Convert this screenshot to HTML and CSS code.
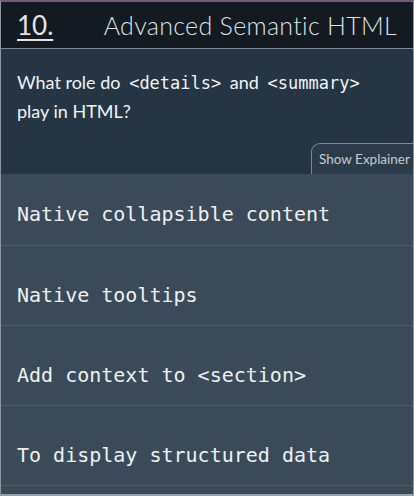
FILE: index.html
```html
<!DOCTYPE html>
<html>
<head>
<meta charset="utf-8">
<link rel="stylesheet" href="styles.css">
</head>
<body>
<div class="card">
  <header class="header">
    <span class="num">10.</span>
    <span class="title">Advanced Semantic HTML</span>
  </header>
  <section class="question">
    <p class="qtext">What role do <code>&lt;details&gt;</code> and <code>&lt;summary&gt;</code> play in HTML?</p>
    <button class="tab">Show Explainer</button>
  </section>
  <ul class="options">
    <li class="opt first">Native collapsible content</li>
    <li class="opt">Native tooltips</li>
    <li class="opt">Add context to &lt;section&gt;</li>
    <li class="opt">To display structured data</li>
  </ul>
</div>
</body>
</html>
```
FILE: styles.css
```css
html, body {
  margin: 0;
  padding: 0;
  background: #3b4a58;
}
.card {
  box-sizing: border-box;
  width: 414px;
  height: 496px;
  display: flex;
  flex-direction: column;
  border-top: 2px solid #6d5a7d;
  border-left: 1px solid #8e969c;
  border-right: 1px solid #8e969c;
  border-bottom: 2px solid #9aa1a6;
  background: #3b4a58;
  font-family: Lato, "Open Sans", sans-serif;
}
.header {
  box-sizing: border-box;
  height: 47px;
  display: flex;
  align-items: center;
  justify-content: space-between;
  padding: 0 16px 0 16px;
  background: #131a21;
  border-bottom: 1px solid #7f878e;
  color: #dfe2e5;
}
.num {
  font-size: 26px;
  font-weight: 400;
  text-decoration: underline;
  text-decoration-thickness: 2px;
  text-underline-offset: 4px;
  color: #e2e4e6;
}
.title {
  font-size: 25px;
  font-weight: 300;
  letter-spacing: 0.3px;
  color: #dfe2e5;
}
.question {
  box-sizing: border-box;
  height: 125px;
  display: flex;
  flex-direction: column;
  background: #253543;
}
.qtext {
  margin: 0;
  padding: 19px 40px 0 16px;
  font-size: 18px;
  line-height: 28px;
  color: #f2f4f5;
}
.qtext code {
  font-family: "DejaVu Sans Mono", monospace;
  font-size: 17px;
  padding: 0 4px;
}
.tab {
  margin-top: auto;
  align-self: flex-end;
  box-sizing: border-box;
  height: 31px;
  width: 102px;
  padding: 0 0 0 7px;
  text-align: left;
  white-space: nowrap;
  overflow: hidden;
  background: #2c3b49;
  border: 1px solid #7c8890;
  border-right: none;
  border-bottom: none;
  border-radius: 9px 0 0 0;
  font-family: Lato, "Open Sans", sans-serif;
  font-size: 13.5px;
  color: #c4cbd0;
}
.options {
  list-style: none;
  margin: 0;
  padding: 0;
  flex: 1;
  background: #3b4a58;
}
.opt {
  box-sizing: border-box;
  height: 80px;
  padding: 37px 16px 0 16px;
  border-bottom: 1px solid #4c5b69;
  font-family: "DejaVu Sans Mono", monospace;
  font-size: 20px;
  line-height: 24px;
  color: #eef1f3;
}
.opt.first {
  height: 72px;
  padding-top: 28px;
}
```
